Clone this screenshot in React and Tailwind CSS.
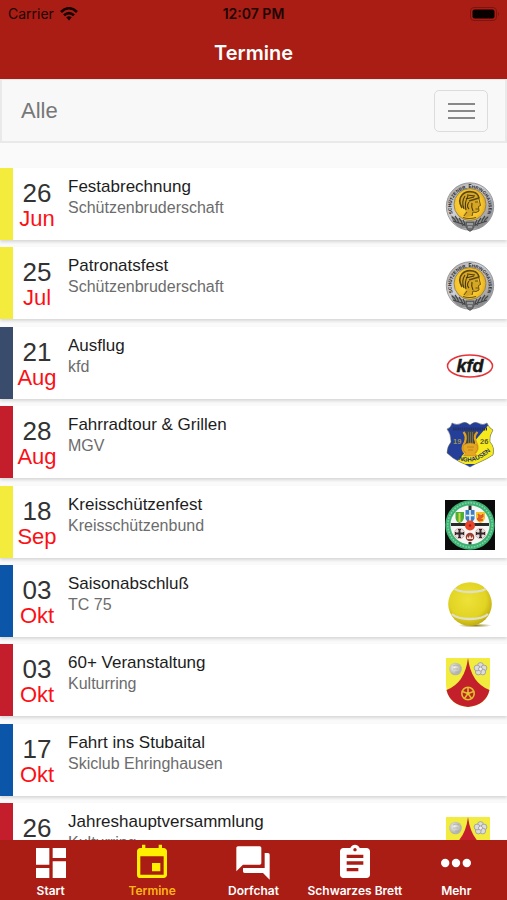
import React from "react";
import { MdDashboard, MdEvent, MdQuestionAnswer, MdAssignment } from "react-icons/md";

function SchuetzenLogo({ id }) {
  return (
    <svg viewBox="0 0 50 50" className="h-full w-full" role="img" aria-label="Schützenbruderschaft">
      <defs>
        <radialGradient id={`${id}-gold`} cx="45%" cy="50%" r="60%">
          <stop offset="0" stopColor="#ffdb4a" />
          <stop offset="0.7" stopColor="#f6c42c" />
          <stop offset="1" stopColor="#dca31b" />
        </radialGradient>
        <linearGradient id={`${id}-silver`} x1="0" x2="1" y1="0" y2="1">
          <stop offset="0" stopColor="#a2a2a4" />
          <stop offset="0.4" stopColor="#d0d0d2" />
          <stop offset="1" stopColor="#8b8b8d" />
        </linearGradient>
        <path id={`${id}-ring`} d="M8.500 33.500 A18.6 18.6 0 1 1 41.500 33.500" />
      </defs>
      <circle cx="25" cy="24.500" r="23.700" fill={`url(#${id}-silver)`} stroke="#8a8a8c" strokeWidth="0.8" />
      <path d="M5.500 33 Q12 37 18 38.500 Q25 41 32 38.500 Q38 37 44.500 33 Q42 43 34 46 L16 46 Q8 43 5.500 33Z" fill="#8d8f90" />
      <path d="M7 35 q3 2 4 5 m-1 -6 q3 3 4 8 m0 -6 q3 3 4 8 m0 -6 q2 3 2 6 M43 35 q-3 2 -4 5 m1 -6 q-3 3 -4 8 m0 -6 q-3 3 -4 8 m0 -6 q-2 3 -2 6 M8 39 l12 4 M42 39 l-12 4" fill="none" stroke="#444647" strokeWidth="1.200" />
      <circle cx="25" cy="22.500" r="16" fill={`url(#${id}-gold)`} stroke="#8b7a4c" strokeWidth="0.8" />
      <text fontFamily="Liberation Sans, sans-serif" fontSize="4.600" fontWeight="700" fill="#222">
        <textPath href={`#${id}-ring`} startOffset="50%" textAnchor="middle">SCHÜTZENBR. EHRINGHAUSEN</textPath>
      </text>
      <path d="M17 25 Q13 18 17 13 Q21 8 28 10 Q34 11 34.500 17 L33 18.500 L35.500 23.500 L33.500 24.500 L34 29 Q31 31 28 30 L27 34 Q22 36 18 34 L21 29Z" fill="#d6a724" />
      <path d="M17 26 Q12.500 18 17 13 Q21 8.500 28 10 Q33 11 34 16 L24 19" fill="none" stroke="#5c4714" strokeWidth="1.600" />
      <path d="M19 27 Q16 20 20 14 M21 28 Q19 21 23 14 M22 13 l8 1 M21 17 l8 -2 M24 20 q-3 4 0 7 M27 21 q-1 4 1 8" fill="none" stroke="#4b390e" strokeWidth="1.100" />
      <path d="M34 17 L35.500 23.500 L33.500 24.500 L34 29 Q31 31.500 28 30 L27 34 M30 20 h3 M30.500 27 h3 M22 30 l-3 4" fill="none" stroke="#6a5115" strokeWidth="1" />
      <path d="M18 35.500 q6 2 13 0" fill="none" stroke="#6d5518" strokeWidth="1.200" />
      <path d="M21 40 H29 V45 Q28 48 25 49.500 Q22 48 21 45Z" fill="#6b6d6e" stroke="#3d3f40" strokeWidth="0.6" />
      <path d="M22 42 H28 M23 45 H27" stroke="#c9cacb" strokeWidth="1" />
    </svg>
  );
}

function KfdLogo() {
  return (
    <svg viewBox="0 0 50 50" className="h-full w-full" role="img" aria-label="kfd">
      <ellipse cx="25" cy="25" rx="22.500" ry="11" fill="#fff" stroke="#e63238" strokeWidth="1.500" />
      <text x="25" y="31" textAnchor="middle" fontFamily="Liberation Sans, sans-serif" fontWeight="700" fontStyle="italic" fontSize="18" fill="#171717" stroke="#171717" strokeWidth="0.5">
        kfd
      </text>
    </svg>
  );
}

function MgvLogo() {
  const shield =
    "M7 3 Q12 6 17 3 Q21 1 25 5 Q29 1 33 3 Q38 6 42 3 Q44 8 48 10 Q44 16 45 22 Q50 27 48 35 Q42 39 35 42 Q30 44 25 47 Q20 44 15 42 Q8 39 2 33 Q2 27 6 22 Q6 14 2 9 Q6 8 7 3Z";
  return (
    <svg viewBox="0 0 50 50" className="h-full w-full" role="img" aria-label="MGV">
      <defs>
        <clipPath id="mgv-shield">
          <path d={shield} />
        </clipPath>
        <path id="mgv-base" d="M4 34 Q25 52 49 28" />
      </defs>
      <g clipPath="url(#mgv-shield)">
        <rect width="50" height="50" fill="#243f9a" />
        <path d="M46 2 L10 44 H50 V2Z" fill="#f7ea1c" />
        <path d="M8 9 H42" stroke="#27325c" strokeWidth="3" strokeDasharray="1.500 0.7" />
      </g>
      <path d={shield} fill="none" stroke="#6b6b50" strokeWidth="0.5" />
      <path d="M21 11 H30 V26 H21Z" fill="#40453f" />
      <path d="M23.500 12 V26 M25.500 12 V26 M27.500 12 V26" stroke="#98875a" strokeWidth="0.6" />
      <path d="M18.500 12 Q22 16 20 22 Q16 28 19 32 H31 Q34 28 31 22 Q28 16 32.500 12" fill="none" stroke="#e2a023" strokeWidth="2.200" />
      <path d="M18.500 25 Q25 21 32 25 Q34 30 30 33 L32 36 H18.500 L21 33 Q16.500 30 18.500 25Z" fill="#e5a623" stroke="#b57b15" strokeWidth="0.5" />
      <path d="M22 27 h7 M23 30 h5" stroke="#b57b15" strokeWidth="0.8" />
      <g fontFamily="Liberation Sans, sans-serif" fontWeight="700">
        <text x="8" y="24" fontSize="7.500" fill="#9c914f">19</text>
        <text x="35" y="24" fontSize="7.500" fill="#5c592c">26</text>
        <text fontSize="6.200" fill="#23305e">
          <textPath href="#mgv-base" startOffset="22%">NGHAUSEN</textPath>
        </text>
      </g>
    </svg>
  );
}

function Cross({ x, y }) {
  return (
    <g>
      <circle cx={x} cy={y} r="5.200" fill="#e6dcda" stroke="#c98d86" strokeWidth="0.6" />
      <path d={`M${x - 4} ${y} h8 M${x} ${y - 4} v8`} stroke="#33252a" strokeWidth="2" />
      <path d={`M${x - 4} ${y - 1.5} v3 M${x + 4} ${y - 1.5} v3 M${x - 1.5} ${y - 4} h3 M${x - 1.5} ${y + 4} h3`} stroke="#33252a" strokeWidth="1" />
    </g>
  );
}

function KreisLogo() {
  return (
    <svg viewBox="0 0 50 50" className="h-full w-full" role="img" aria-label="Kreisschützenbund">
      <rect width="50" height="50" fill="#0b0b0b" />
      <circle cx="25" cy="25" r="24.700" fill="#3bb271" />
      <circle cx="25" cy="25" r="22.200" fill="none" stroke="#7fd0a2" strokeWidth="1.600" strokeDasharray="1.800 1.100" />
      <circle cx="25" cy="25" r="19.600" fill="#f6f6f4" />
      <path d="M6 24.500 H44" stroke="#2b2a2b" strokeWidth="3" />
      <path d="M25 5.500 V11 M25 42 V44.500" stroke="#2b2a2b" strokeWidth="3" />
      <path d="M10.500 12 H19 V18 Q18 22 14.500 23 Q11 22 10.500 18Z" fill="#4fae38" />
      <path d="M14.500 13 V22" stroke="#cfd835" strokeWidth="2" />
      <path d="M20.500 10 H29.500 V19 Q28 22 25 23 Q22 22 20.500 19Z" fill="#3e7fc3" />
      <path d="M25 10 V22 M21 15.500 H29" stroke="#e8eef5" strokeWidth="1.600" />
      <path d="M31 12 H40 V18 Q39 22 35.500 23 Q32 22 31 18Z" fill="#f3c12a" />
      <path d="M33 14 l3 2 l2 -2 v3 l-3 1 l3 2 l-4 1 l-2 -2 l2 -2Z" fill="#e4572b" stroke="#e4572b" />
      <circle cx="25" cy="25.500" r="5" fill="#e8432b" />
      <circle cx="25" cy="25.500" r="1.200" fill="#9b2118" />
      <Cross x={14.500} y={33.500} />
      <Cross x={35.500} y={33.500} />
      <circle cx="25" cy="37" r="4.300" fill="#9c3d31" />
      <path d="M22 36 l1.500 2 L25 35 l1.500 3 L28 36 v3 h-6Z" fill="#eadbd2" />
    </svg>
  );
}

function TennisLogo() {
  return (
    <svg viewBox="0 0 50 50" className="h-full w-full" role="img" aria-label="Tennisball">
      <defs>
        <radialGradient id="tennis-ball" cx="45%" cy="40%" r="60%">
          <stop offset="0" stopColor="#ede23a" />
          <stop offset="0.7" stopColor="#e2d422" />
          <stop offset="1" stopColor="#c2ae14" />
        </radialGradient>
        <radialGradient id="tennis-shadow">
          <stop offset="0" stopColor="#8c7c14" />
          <stop offset="1" stopColor="#8c7c14" stopOpacity="0" />
        </radialGradient>
        <clipPath id="tennis-clip">
          <circle cx="25" cy="25" r="21.800" />
        </clipPath>
      </defs>
      <ellipse cx="30" cy="46.500" rx="17" ry="2" fill="url(#tennis-shadow)" />
      <circle cx="25" cy="25" r="21.800" fill="url(#tennis-ball)" />
      <g clipPath="url(#tennis-clip)" fill="none" stroke="#dfe0c4" strokeWidth="2.400">
        <path d="M8 8 Q11 13 25 13 Q39 13 43 8" />
        <path d="M7 35 Q12 40 25 40 Q38 40 43 35" />
      </g>
    </svg>
  );
}

function KulturringLogo() {
  return (
    <svg viewBox="0 0 50 50" className="h-full w-full" role="img" aria-label="Kulturring">
      <defs>
        <radialGradient id="kultur-disc" cx="40%" cy="40%">
          <stop offset="0" stopColor="#f2f2ee" />
          <stop offset="1" stopColor="#b4b4ac" />
        </radialGradient>
      </defs>
      <path d="M1 0 H45 V27 Q44 47 23 49 Q2 47 1 27Z" fill="#f1ec3e" />
      <path d="M23 0 Q26 25 44.500 32 Q41 47 23 49 Q5 47 1.500 32 Q20 25 23 0Z" fill="#c4202c" />
      <circle cx="10.500" cy="11" r="6.300" fill="url(#kultur-disc)" />
      <path d="M8 8 q3 -2 6 0 M8 11 h5 M10 14 h4" stroke="#a8a8a2" strokeWidth="0.7" fill="none" />
      <g fill="#dcdcdd" stroke="#98989c" strokeWidth="0.8">
        <circle cx="35.500" cy="7.500" r="2.900" />
        <circle cx="39" cy="10" r="2.900" />
        <circle cx="37.700" cy="14" r="2.900" />
        <circle cx="33.300" cy="14" r="2.900" />
        <circle cx="32" cy="10" r="2.900" />
        <circle cx="35.500" cy="11" r="2" fill="#f0f0f2" />
      </g>
      <g fill="none" stroke="#dcc02c" strokeWidth="1.600">
        <circle cx="23" cy="35.500" r="6.200" />
        <path d="M23 29.500 V35.500 M23 35.500 L28.700 33.600 M23 35.500 L26.500 40.400 M23 35.500 L19.500 40.400 M23 35.500 L17.300 33.600" />
      </g>
      <circle cx="23" cy="35.500" r="1.500" fill="#e2c62c" />
    </svg>
  );
}

const events = [
  { day: "26", month: "Jun", title: "Festabrechnung", club: "Schützenbruderschaft", bar: "bg-[#f4ec3c]", logo: <SchuetzenLogo id="fest" /> },
  { day: "25", month: "Jul", title: "Patronatsfest", club: "Schützenbruderschaft", bar: "bg-[#f4ec3c]", logo: <SchuetzenLogo id="patron" /> },
  { day: "21", month: "Aug", title: "Ausflug", club: "kfd", bar: "bg-[#3a4c6b]", logo: <KfdLogo /> },
  { day: "28", month: "Aug", title: "Fahrradtour & Grillen", club: "MGV", bar: "bg-[#c41e2d]", logo: <MgvLogo /> },
  { day: "18", month: "Sep", title: "Kreisschützenfest", club: "Kreisschützenbund", bar: "bg-[#f4ec3c]", logo: <KreisLogo /> },
  { day: "03", month: "Okt", title: "Saisonabschluß", club: "TC 75", bar: "bg-[#0b56a8]", logo: <TennisLogo /> },
  { day: "03", month: "Okt", title: "60+ Veranstaltung", club: "Kulturring", bar: "bg-[#c41e2d]", logo: <KulturringLogo /> },
  { day: "17", month: "Okt", title: "Fahrt ins Stubaital", club: "Skiclub Ehringhausen", bar: "bg-[#0b56a8]", logo: null },
  { day: "26", month: "Okt", title: "Jahreshauptversammlung", club: "Kulturring", bar: "bg-[#c41e2d]", logo: <KulturringLogo /> },
];

function EventRow({ event }) {
  return (
    <li className="flex h-18 shrink-0 bg-white shadow-[0_2px_3px_rgba(0,0,0,0.14)]">
      <div className={`w-[13px] shrink-0 ${event.bar}`} />
      <div className="w-12 shrink-0 pt-3 text-center">
        <div className="text-[26px] leading-[26px] text-[#333]">{event.day}</div>
        <div className="text-[22px] leading-[26px] text-[#fb1015]">{event.month}</div>
      </div>
      <div className="min-w-0 flex-1 pt-2 pl-[7px]">
        <h2 className="truncate text-[17px] leading-[22px] text-[#1d1d1d]">{event.title}</h2>
        <p className="truncate text-base leading-[20px] text-[#6c6c6c]">{event.club}</p>
      </div>
      <div className="mt-[14px] mr-3 size-[50px] shrink-0">{event.logo}</div>
    </li>
  );
}

function MoreDots() {
  return (
    <svg viewBox="0 0 40 40" className="size-10" aria-hidden="true" fill="currentColor">
      <circle cx="9.200" cy="20" r="4.200" />
      <circle cx="20" cy="20" r="4.200" />
      <circle cx="30.800" cy="20" r="4.200" />
    </svg>
  );
}

const tabs = [
  { label: "Start", icon: <MdDashboard className="size-10" /> },
  { label: "Termine", icon: <MdEvent className="size-10 text-[#fff000]" />, active: true },
  { label: "Dorfchat", icon: <MdQuestionAnswer className="size-10" /> },
  { label: "Schwarzes Brett", icon: <MdAssignment className="size-10" /> },
  { label: "Mehr", icon: <MoreDots /> },
];

export default function App() {
  return (
    <div className="flex h-screen flex-col overflow-hidden bg-[#fafafa] font-['Liberation_Sans',Arial,sans-serif]">
      <header className="shrink-0 bg-[#a91d14] font-[Inter,sans-serif]">
        <div className="grid h-[27px] grid-cols-3 items-center px-2 text-sm text-[#200504]">
          <div className="flex items-center gap-[6px]">
            <span>Carrier</span>
            <svg viewBox="0 0 18 14" className="h-[14px] w-[18px]" aria-hidden="true" fill="none" stroke="#160302" strokeWidth="2.600">
              <path d="M1 5 Q9 -2.500 17 5" />
              <path d="M4 8.300 Q9 3.800 14 8.300" />
              <path d="M6.200 10.300 Q9 8 11.800 10.300 L9 13.500Z" fill="#160302" stroke="none" />
            </svg>
          </div>
          <div className="text-center font-semibold">12:07 PM</div>
          <svg viewBox="0 0 29 14" className="h-[14px] w-[29px] justify-self-end" aria-hidden="true">
            <rect x="0.500" y="0.500" width="26" height="13" rx="3.500" fill="none" stroke="#7d150e" />
            <rect x="2.500" y="2.500" width="22" height="9" rx="2" fill="#080100" />
            <path d="M28 5 Q29.500 7 28 9Z" fill="#6d120c" />
          </svg>
        </div>
        <h1 className="flex h-[52px] items-center justify-center text-xl font-semibold text-white">Termine</h1>
      </header>

      <main className="min-h-0 flex-1 overflow-y-auto [scrollbar-width:none]">
        <div className="flex h-16 items-center justify-between border-2 border-t border-[#e9e9e9] bg-[#f8f8f8] pr-[17px] pl-[19px]">
          <span className="text-[22px] text-[#777]">Alle</span>
          <button
            type="button"
            aria-label="Menü"
            className="flex h-[42px] w-[54px] flex-col items-center justify-center gap-[5px] rounded-[5px] border border-[#dcdcdc]"
          >
            <span className="h-[2px] w-[27px] bg-[#888]" />
            <span className="h-[2px] w-[27px] bg-[#888]" />
            <span className="h-[2px] w-[27px] bg-[#888]" />
          </button>
        </div>
        <ul className="mt-[25px] flex min-h-[707px] flex-col justify-between">
          {events.map((event, index) => (
            <EventRow key={index} event={event} />
          ))}
        </ul>
      </main>

      <nav className="grid h-[60px] shrink-0 grid-cols-5 bg-[#a91d14] font-[Inter,sans-serif]">
        {tabs.map((tab) => (
          <button
            key={tab.label}
            type="button"
            aria-current={tab.active ? "page" : undefined}
            className={`flex flex-col items-center justify-start pt-[3px] text-xs font-semibold whitespace-nowrap ${tab.active ? "text-[#ffb414]" : "text-white"}`}
          >
            {tab.icon}
            <span>{tab.label}</span>
          </button>
        ))}
      </nav>
    </div>
  );
}
